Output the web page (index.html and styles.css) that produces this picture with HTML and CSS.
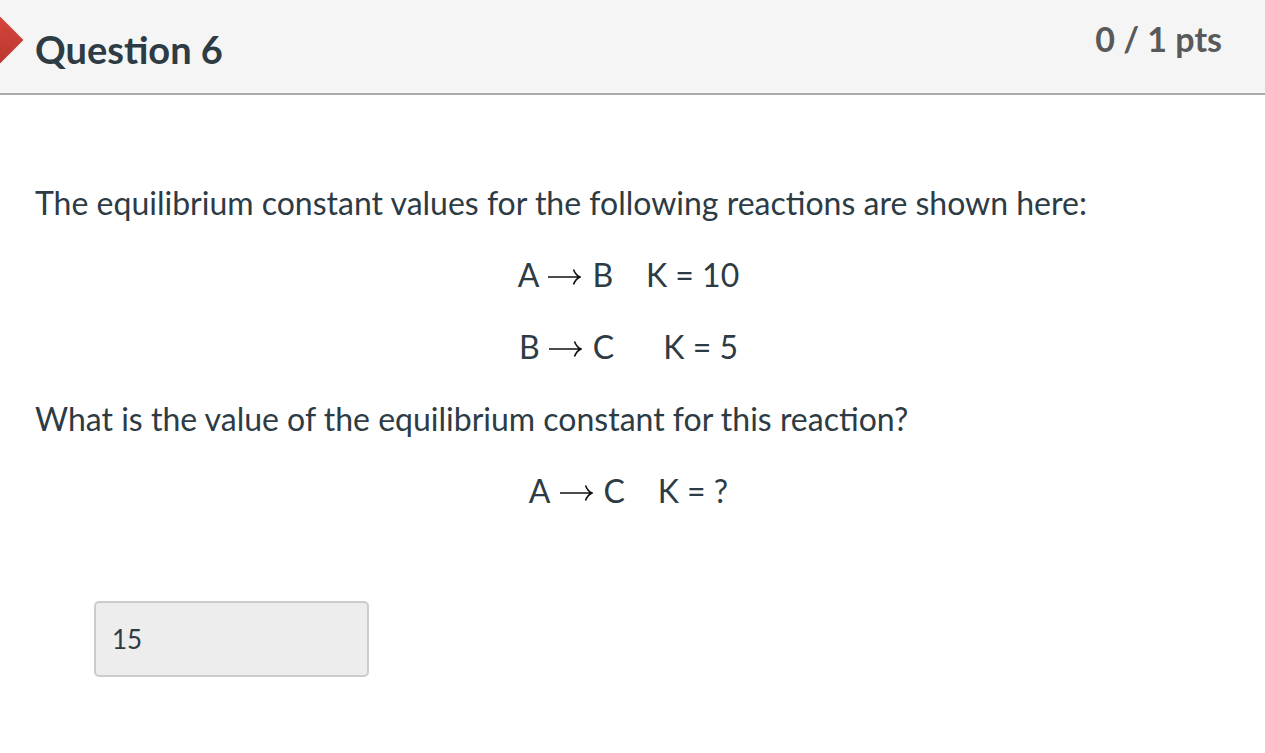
FILE: index.html
```html
<!DOCTYPE html>
<html>
<head>
<meta charset="utf-8">
<link rel="stylesheet" href="styles.css">
</head>
<body>
<div class="question">
  <div class="header">
    <span class="marker"></span>
    <h2 class="title">Question 6</h2>
    <div class="pts">0 / 1 pts</div>
  </div>
  <div class="content">
    <p>The equilibrium constant values for the following reactions are shown here:</p>
    <p class="eq">A<svg class="arrow" viewBox="0 0 34 18" width="34" height="18"><path d="M1 9H32.5M26.5 1.5Q28.5 7 33 9Q28.5 11 26.5 16.5" fill="none" stroke="#111" stroke-width="1.6"/></svg>B&nbsp;&nbsp;&nbsp; K = 10</p>
    <p class="eq">B<svg class="arrow" viewBox="0 0 34 18" width="34" height="18"><path d="M1 9H32.5M26.5 1.5Q28.5 7 33 9Q28.5 11 26.5 16.5" fill="none" stroke="#111" stroke-width="1.6"/></svg>C&nbsp;&nbsp;&nbsp;&nbsp;&nbsp; K = 5</p>
    <p>What is the value of the equilibrium constant for this reaction?</p>
    <p class="eq">A<svg class="arrow" viewBox="0 0 34 18" width="34" height="18"><path d="M1 9H32.5M26.5 1.5Q28.5 7 33 9Q28.5 11 26.5 16.5" fill="none" stroke="#111" stroke-width="1.6"/></svg>C&nbsp;&nbsp;&nbsp; K = ?</p>
    <div class="answer"><div class="box">15</div></div>
  </div>
</div>
</body>
</html>
```

FILE: styles.css
```css
html, body {
  margin: 0;
  padding: 0;
  background: #fff;
}
body {
  font-family: Lato, "Noto Sans", sans-serif;
  color: #2d3b45;
  overflow: hidden;
}
.header {
  position: relative;
  height: 93px;
  background: #f5f5f5;
  border-bottom: 2px solid #aaaaaa;
  display: flex;
  align-items: flex-start;
  justify-content: space-between;
  padding: 0 43px 0 35px;
  overflow: hidden;
}
.marker {
  position: absolute;
  left: -20px;
  top: 22px;
  width: 36px;
  height: 36px;
  background: linear-gradient(135deg, #d9453b, #b8372f);
  transform: rotate(45deg);
}
.title {
  margin: 26px 0 0 0;
  font-size: 38px;
  font-weight: 700;
  line-height: 46px;
  color: #2d3b45;
}
.pts {
  margin-top: 18px;
  font-size: 34px;
  font-weight: 700;
  line-height: 42px;
  color: #595959;
}
.content {
  padding: 86px 43px 0 35px;
}
.content p {
  margin: 0 0 28px 0;
  font-size: 32px;
  line-height: 44px;
}
.content p.eq {
  text-align: center;
}
.arrow {
  display: inline-block;
  vertical-align: middle;
  margin: -3px 11px 0 8px;
}
.answer {
  padding: 60px 0 0 59px;
}
.box {
  width: 246px;
  height: 52px;
  padding: 10px 9px 10px 16px;
  background: #ededed;
  border: 2px solid #cccccc;
  border-radius: 5px;
  font-size: 26px;
  line-height: 52px;
  color: #2d3b45;
  box-sizing: content-box;
}
```
